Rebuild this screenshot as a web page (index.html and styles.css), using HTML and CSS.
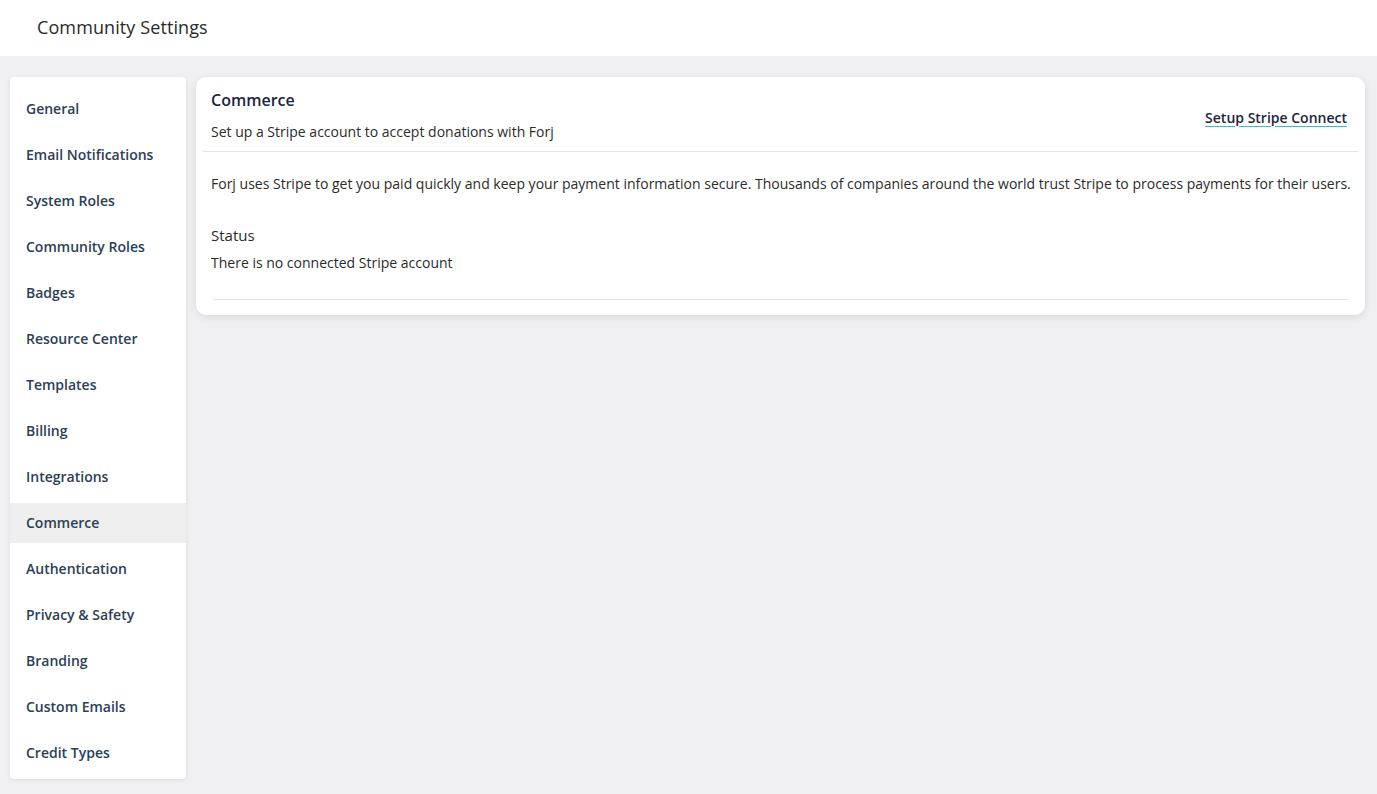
FILE: index.html
```html
<!DOCTYPE html>
<html>
<head>
<meta charset="utf-8">
<link rel="stylesheet" href="styles.css">
</head>
<body>
<header class="topbar"><h1 class="page-title">Community Settings</h1></header>
<div class="layout">
  <nav class="sidebar">
    <a class="nav-item">General</a>
    <a class="nav-item">Email Notifications</a>
    <a class="nav-item">System Roles</a>
    <a class="nav-item">Community Roles</a>
    <a class="nav-item">Badges</a>
    <a class="nav-item">Resource Center</a>
    <a class="nav-item">Templates</a>
    <a class="nav-item">Billing</a>
    <a class="nav-item">Integrations</a>
    <a class="nav-item active">Commerce</a>
    <a class="nav-item">Authentication</a>
    <a class="nav-item">Privacy &amp; Safety</a>
    <a class="nav-item">Branding</a>
    <a class="nav-item">Custom Emails</a>
    <a class="nav-item">Credit Types</a>
  </nav>
  <main class="card">
    <div class="card-head">
      <div class="head-text">
        <h2 class="card-title">Commerce</h2>
        <p class="card-sub">Set up a Stripe account to accept donations with Forj</p>
      </div>
      <a class="stripe-link">Setup Stripe Connect</a>
    </div>
    <div class="card-body">
      <p class="intro">Forj uses Stripe to get you paid quickly and keep your payment information secure. Thousands of companies around the world trust Stripe to process payments for their users.</p>
      <h3 class="status-label">Status</h3>
      <p class="status-text">There is no connected Stripe account</p>
      <hr class="bottom-rule">
    </div>
  </main>
</div>
</body>
</html>
```
FILE: styles.css
```css
* { box-sizing: border-box; }
html, body { margin: 0; padding: 0; }
body {
  font-family: "Open Sans", "Noto Sans", sans-serif;
  background: #f0f0f2;
  color: #2b2b2b;
  height: 794px;
  overflow: hidden;
}
.topbar {
  background: #fff;
  height: 56px;
  display: flex;
  align-items: center;
  padding-left: 37px;
  padding-bottom: 2px;
}
.page-title {
  margin: 0;
  font-size: 18px;
  font-weight: 400;
  color: #2a2a2a;
  letter-spacing: 0.1px;
}
.layout {
  display: flex;
  align-items: flex-start;
  gap: 10px;
  padding: 21px 12px 0 10px;
}
.sidebar {
  width: 176px;
  flex: none;
  background: #fff;
  border-radius: 4px;
  box-shadow: 0 1px 4px rgba(0,0,0,0.08);
  padding: 6px 0;
  display: flex;
  flex-direction: column;
}
.nav-item {
  display: flex;
  align-items: center;
  height: 40px;
  margin-top: 6px;
  padding-left: 16px;
  padding-bottom: 2px;
  font-size: 14px;
  font-weight: 600;
  color: #2c3e55;
  cursor: pointer;
}
.nav-item.active { background: #efefef; }
.card {
  flex: 1;
  min-width: 0;
  background: #fff;
  border-radius: 10px;
  box-shadow: 0 2px 8px rgba(0,0,0,0.10);
  padding: 0 7px 15px 7px;
}
.card-head {
  display: flex;
  justify-content: space-between;
  align-items: center;
  padding: 12px 11px 9px 8px;
  border-bottom: 1px solid #e4e4e6;
}
.card-title {
  margin: 0;
  font-size: 16px;
  font-weight: 600;
  color: #1c2540;
  line-height: 22px;
}
.card-sub {
  margin: 11px 0 0;
  font-size: 14px;
  line-height: 20px;
  color: #2b2b2b;
}
.stripe-link {
  font-size: 14px;
  font-weight: 600;
  color: #1c2540;
  text-decoration: underline;
  text-decoration-color: #2ec4c6;
  text-underline-offset: 3px;
  margin-top: 3px;
  cursor: pointer;
}
.card-body {
  padding: 22px 4px 0 8px;
}
.intro {
  margin: 0;
  font-size: 14px;
  line-height: 20px;
  color: #2b2b2b;
  white-space: nowrap;
}
.status-label {
  margin: 31px 0 0;
  font-size: 15px;
  font-weight: 400;
  line-height: 20px;
  color: #2b2b2b;
}
.status-text {
  margin: 8px 0 0;
  font-size: 14px;
  line-height: 20px;
  color: #2b2b2b;
}
.bottom-rule {
  margin: 26px 6px 0 2px;
  border: 0;
  border-top: 1px solid #e2e2e4;
}
```
